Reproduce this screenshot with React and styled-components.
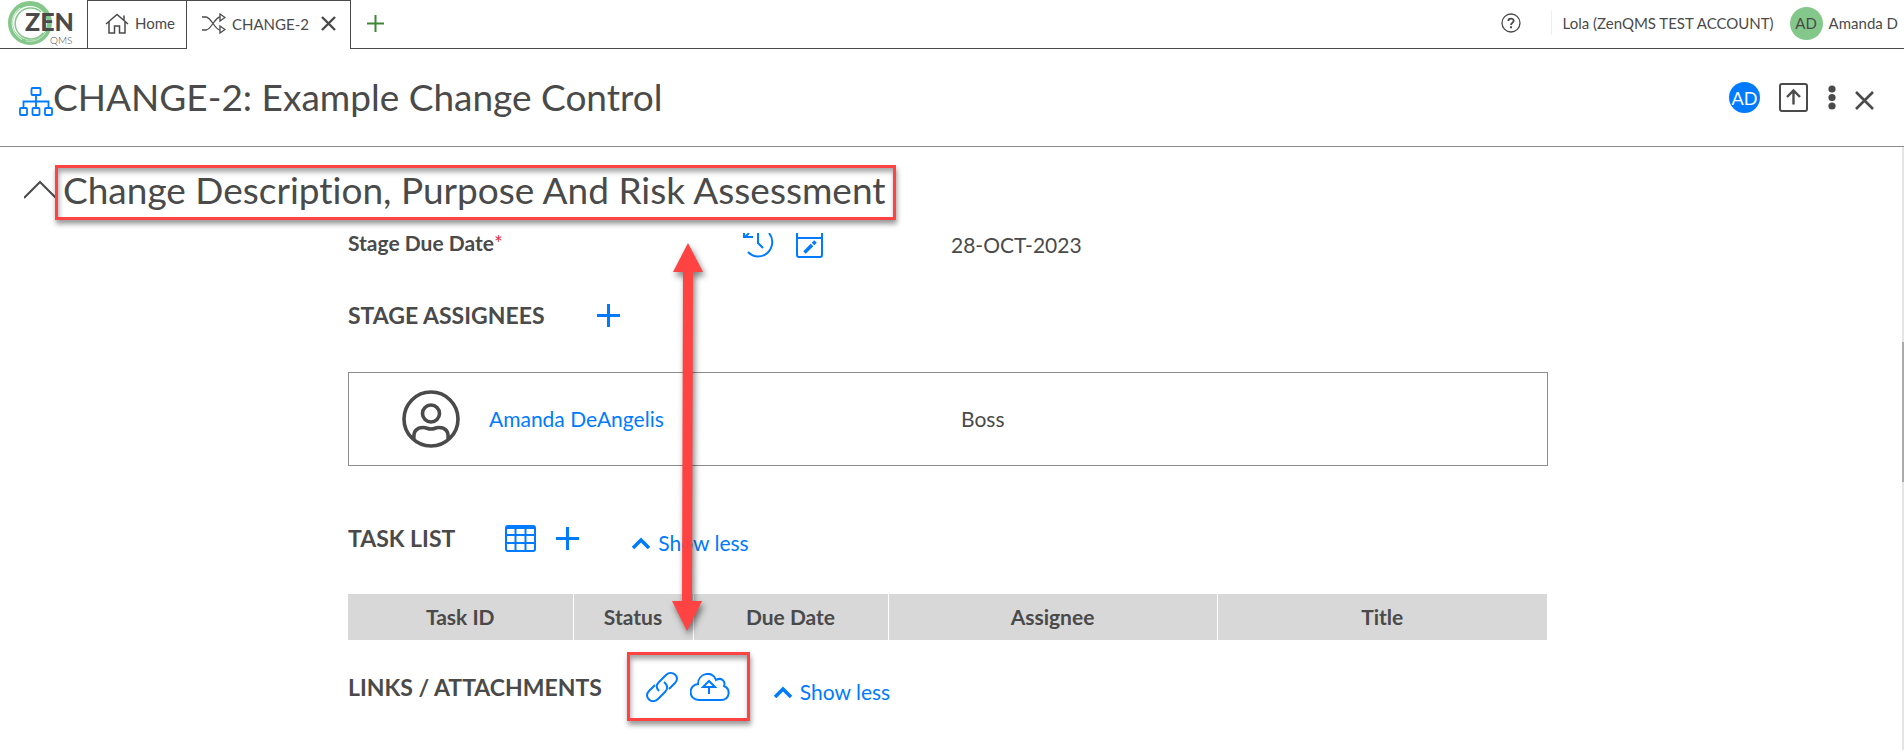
import React from 'react'
import styled, { createGlobalStyle } from 'styled-components'

const ink = '#4a4a4a'
const blue = '#007bff'
const red = '#ff4343'

const GlobalStyle = createGlobalStyle`
  * {
    box-sizing: border-box;
  }

  body {
    margin: 0;
    background: #fff;
    color: ${ink};
    font-family: Lato, 'Open Sans', sans-serif;
    font-size: 21px;
    font-variant-ligatures: none;
    line-height: 24px;
  }

  svg {
    display: block;
    flex: none;
  }
`

const Page = styled.div`
  display: flex;
  flex-direction: column;
  height: 100vh;
  overflow: hidden;
`

const TopBar = styled.header`
  display: flex;
  flex: none;
  height: 49px;
  font-size: 15px;
`

const LogoCell = styled.a`
  width: 87px;
  padding-left: 8px;
  border-bottom: 1px solid ${ink};
`

const Tab = styled.div`
  display: flex;
  align-items: center;
  padding: 0 ${props => (props.$active ? 14 : 11)}px 3px
    ${props => (props.$active ? 15 : 17)}px;
  border: solid ${ink};
  border-width: ${props => (props.$active ? '1px 1px 0 0' : '1px')};
`

const TabLink = styled.a`
  display: flex;
  align-items: center;
  gap: 6px;
  color: inherit;
  text-decoration: none;
`

const IconButton = styled.button`
  display: flex;
  align-items: center;
  justify-content: center;
  padding: 0;
  border: 0;
  background: none;
  color: ${props => props.$color || ink};
  cursor: pointer;
`

const CloseTab = styled(IconButton)`
  margin-left: 12px;
`

const TopRest = styled.div`
  display: flex;
  flex: 1;
  align-items: center;
  justify-content: space-between;
  padding: 0 6px 2px 16px;
  border-bottom: 1px solid ${ink};
`

const Account = styled.div`
  display: flex;
  align-items: center;
`

const AccountName = styled.span`
  margin: 0 16px 0 30px;
  padding-left: 11px;
  border-left: 1px solid #eee;
`

const Avatar = styled.span`
  display: flex;
  align-items: center;
  justify-content: center;
  width: ${props => props.$size}px;
  height: ${props => props.$size}px;
  margin-right: ${props => props.$gap}px;
  border-radius: 50%;
  background: ${props => (props.$blue ? blue : '#83c88a')};
  color: ${props => (props.$blue ? '#fff' : ink)};
`

const TitleBar = styled.div`
  display: flex;
  flex: none;
  align-items: center;
  height: 98px;
  padding: 0 30px 0 19px;
  border-bottom: 1px solid #8c8c8c;
`

const Title = styled.h1`
  flex: 1;
  margin: 0;
  padding-bottom: 2px;
  font-size: 37px;
  font-weight: 400;
  line-height: 48px;
`

const Actions = styled.div`
  display: flex;
  align-items: center;
  font-size: 18px;
`

const Main = styled.main`
  position: relative;
  display: flex;
  flex: 1;
  flex-direction: column;
  min-height: 0;
`

const SectionBar = styled.div`
  display: flex;
  flex: none;
  align-items: center;
  height: 82px;
  padding: 9px 0 0 24px;
`

const SectionToggle = styled(IconButton)`
  width: 31px;
  overflow: hidden;
`

const Marked = styled.div`
  border: 3px solid ${red};
  box-shadow: 1px 4px 5px rgba(0, 0, 0, 0.4),
    inset 1px 4px 5px rgba(0, 0, 0, 0.35);
`

const SectionMark = styled(Marked)`
  padding: 0 7px 5px 5px;
`

const SectionTitle = styled.h2`
  margin: 0;
  font-size: 37px;
  font-weight: 400;
  line-height: 44px;
`

const Scroller = styled.div`
  flex: 1;
  min-height: 0;
  overflow: hidden;
  padding: 4px 8px 0 0;
`

const Content = styled.div`
  max-width: 1200px;
  margin: 0 auto;
`

const DueRow = styled.div`
  display: grid;
  grid-template-columns: 395px 208px 1fr;
  height: 64px;
`

const DueLabel = styled.span`
  font-weight: 700;
  line-height: 20px;

  em {
    color: #dc3545;
    font-style: normal;
    font-weight: 400;
  }
`

const DueIcons = styled.div`
  display: flex;
  align-items: flex-start;
  gap: 22px;
`

const Row = styled.div`
  display: flex;
  align-items: center;
  height: ${props => props.$height}px;
`

const Heading = styled.h3`
  margin: 0 ${props => props.$gap}px 0 0;
  font-size: 23px;
  font-weight: 700;
  line-height: 32px;
`

const Assignee = styled.div`
  display: grid;
  grid-template-columns: 140px 472px 1fr;
  align-items: center;
  height: 94px;
  margin: 39px 0 46px;
  border: 1px solid #8c8c8c;
`

const PersonCell = styled.div`
  padding-left: 53px;
`

const PersonLink = styled.a`
  color: ${blue};
  text-decoration: none;
`

const TaskTools = styled.div`
  display: flex;
  align-items: center;
  gap: 20px;
`

const ShowLess = styled(IconButton)`
  gap: 8px;
  margin: 10px 0 0 ${props => props.$gap}px;
  font: inherit;
`

const TaskTable = styled.table`
  width: 100%;
  margin-top: 30px;
  border-collapse: collapse;
  table-layout: fixed;
`

const TaskHead = styled.th`
  width: ${props => props.$width};
  height: 46px;
  padding: 0;
  border-right: 1px solid #fff;
  background: #d8d8d8;
  font-weight: 700;
`

const UploadMark = styled(Marked)`
  display: flex;
  align-items: center;
  gap: 12px;
  width: 123px;
  height: 69px;
  padding: 0 16px;
`

/* Pointer drawn over the content, from the section title to the upload tools */
const Arrow = styled.svg`
  position: absolute;
  top: 90px;
  left: 664px;
  filter: drop-shadow(2px 4px 3px rgba(0, 0, 0, 0.5));
  pointer-events: none;
`

const Track = styled.div`
  position: absolute;
  top: 0;
  right: 0;
  bottom: 0;
  width: 2px;
  padding-top: 195px;
  background: #e4e4e4;
`

const Thumb = styled.div`
  height: 140px;
  background: #ababab;
`

const Svg = ({ w, h, sw = 2, children }) => (
  <svg
    width={w}
    height={h}
    viewBox={`0 0 ${w} ${h}`}
    fill="none"
    stroke="currentColor"
    strokeWidth={sw}
    aria-hidden="true"
  >
    {children}
  </svg>
)

const Logo = () => (
  <svg width="76" height="48" viewBox="0 0 76 48" role="img" aria-label="ZEN QMS">
    <g fill="none">
      <circle cx="22" cy="23" r="19.5" stroke="#83c88a" strokeWidth="5" />
      <path d="M33 12A15.500 15.500 0 1 0 35 33" stroke="#83c88a" strokeWidth="1.5" />
      <path d="M12 8A18.500 18.500 0 0 0 14 39.500" stroke="#fff" strokeWidth="0.8" />
      <path d="M18 41A18.500 18.500 0 0 0 38 32" stroke="#fff" strokeWidth="0.6" />
    </g>
    <text x="17" y="31" fill={ink} fontSize="25" fontWeight="900" fontFamily="Lato">
      ZEN
    </text>
    <text x="42" y="44" fill={ink} fontSize="10" fontWeight="300" fontFamily="Lato">
      QMS
    </text>
  </svg>
)

const Plus = ({ size, sw = 3 }) => (
  <Svg w={size} h={size} sw={sw}>
    <path d={`M${size / 2} 0V${size}M0 ${size / 2}H${size}`} />
  </Svg>
)

const Cross = ({ size, sw = 2 }) => (
  <Svg w={size} h={size} sw={sw}>
    <path d={`M1 1L${size - 1} ${size - 1}M${size - 1} 1L1 ${size - 1}`} />
  </Svg>
)

const LessToggle = ({ gap }) => (
  <ShowLess type="button" $color={blue} $gap={gap}>
    <Svg w={18} h={12} sw={3.6}>
      <path d="M1 11L9 3L17 11" />
    </Svg>
    Show less
  </ShowLess>
)

const columns = [
  { label: 'Task ID', width: '225px' },
  { label: 'Status', width: '120px' },
  { label: 'Due Date', width: '195px' },
  { label: 'Assignee', width: '329px' },
  { label: 'Title' },
]

function App() {
  return (
    <Page>
      <GlobalStyle />
      <TopBar>
        <LogoCell href="#">
          <Logo />
        </LogoCell>
        <Tab>
          <TabLink href="#">
            <Svg w={24} h={21} sw={1.5}>
              <path d="M1 11L12 1.500L23 11M19 7V2.500M4 9V20H9.500V13H14.500V20H20V9" />
            </Svg>
            Home
          </TabLink>
        </Tab>
        <Tab $active>
          <TabLink href="#">
            <Svg w={24} h={21} sw={1.3}>
              <path d="M0 4H4C9 4 13 17 18 17M0 17H4C9 17 13 4 18 4" />
              <path d="M18 1L23 4.500L18 8ZM18 13L23 16.500L18 20Z" />
            </Svg>
            CHANGE-2
          </TabLink>
          <CloseTab type="button" aria-label="Close tab">
            <Cross size={15} sw={2.4} />
          </CloseTab>
        </Tab>
        <TopRest>
          <IconButton type="button" aria-label="New tab" $color="#3f8534">
            <Plus size={17} sw={2} />
          </IconButton>
          <Account>
            <IconButton type="button" aria-label="Help">
              <Svg w={20} h={20} sw={1.3}>
                <circle cx="10" cy="10" r="9" />
                <path
                  d="M7.300 8C7.300 4.800 12.700 4.800 12.700 7.800C12.700 9.800 10 9.600 10 12"
                  strokeWidth="1.8"
                />
                <path d="M10 13.300V15.200" strokeWidth="2" />
              </Svg>
            </IconButton>
            <AccountName>Lola (ZenQMS TEST ACCOUNT)</AccountName>
            <Avatar $size={33} $gap={6}>
              AD
            </Avatar>
            Amanda D
          </Account>
        </TopRest>
      </TopBar>

      <TitleBar>
        <IconButton type="button" aria-label="Hierarchy" $color={blue}>
          <Svg w={34} h={38} sw={1.8}>
            <rect x="12.500" y="9" width="9" height="7" rx="1" />
            <rect x="1" y="29" width="7" height="7" rx="1" />
            <rect x="13.500" y="29" width="7" height="7" rx="1" />
            <rect x="26" y="29" width="7" height="7" rx="1" />
            <path d="M17 16V29M4.500 29V22.500H29.500V29" />
          </Svg>
        </IconButton>
        <Title>CHANGE-2: Example Change Control</Title>
        <Actions>
          <Avatar $blue $size={31} $gap={19}>
            AD
          </Avatar>
          <IconButton type="button" aria-label="Export">
            <Svg w={29} h={29}>
              <rect x="1" y="1" width="27" height="27" rx="2" />
              <path d="M14.500 21.500V8M8 14L14.500 7.500L21 14" strokeWidth="2.4" />
            </Svg>
          </IconButton>
          <IconButton type="button" aria-label="More">
            <Svg w={47} h={25} sw={0}>
              <g fill="currentColor">
                <circle cx="24" cy="4" r="3.6" />
                <circle cx="24" cy="12.5" r="3.6" />
                <circle cx="24" cy="21" r="3.6" />
              </g>
            </Svg>
          </IconButton>
          <IconButton type="button" aria-label="Close">
            <Svg w={19} h={24} sw={2.6}>
              <path d="M1 6L18 23M18 6L1 23" />
            </Svg>
          </IconButton>
        </Actions>
      </TitleBar>

      <Main>
        <SectionBar>
          <SectionToggle type="button" aria-label="Collapse section">
            <Svg w={33} h={26}>
              <path d="M1 18L17 2L33 18" />
            </Svg>
          </SectionToggle>
          <SectionMark>
            <SectionTitle>Change Description, Purpose And Risk Assessment</SectionTitle>
          </SectionMark>
        </SectionBar>

        <Scroller>
          <Content>
            <DueRow>
              <DueLabel>
                Stage Due Date<em>*</em>
              </DueLabel>
              <DueIcons>
                <IconButton type="button" aria-label="History" $color={blue}>
                  <Svg w={31} h={25}>
                    <path d="M1 0V4H10M2 4L6 0" />
                    <path d="M15 0V10L20 15M26 0C33 9 28 23 15 23.500C10 23.500 7 21 5 19" />
                  </Svg>
                </IconButton>
                <IconButton type="button" aria-label="Edit date" $color={blue}>
                  <Svg w={27} h={25}>
                    <path d="M1 0V22Q1 24 3 24H24Q26 24 26 22V0M1 5H26" />
                    <path d="M8.500 19.500L16 12" strokeWidth="3.6" />
                    <path d="M17 11L19.500 8.500" strokeWidth="3.6" />
                  </Svg>
                </IconButton>
              </DueIcons>
              <span>28-OCT-2023</span>
            </DueRow>

            <Row $height={36}>
              <Heading $gap={52}>STAGE ASSIGNEES</Heading>
              <IconButton type="button" aria-label="Add assignee" $color={blue}>
                <Plus size={23} />
              </IconButton>
            </Row>
            <Assignee>
              <PersonCell>
                <Svg w={58} h={58} sw={3.6}>
                  <circle cx="29" cy="29" r="27" />
                  <circle cx="29" cy="23.5" r="8.5" />
                  <path d="M12 49C11 41 15 37.500 21 37.500C25 37.500 25 39 29 39S33 37.500 37 37.500C43 37.500 47 41 46 49" />
                </Svg>
              </PersonCell>
              <PersonLink href="#">Amanda DeAngelis</PersonLink>
              <span>Boss</span>
            </Assignee>

            <Row $height={52}>
              <Heading $gap={50}>TASK LIST</Heading>
              <TaskTools>
                <IconButton type="button" aria-label="Table view" $color={blue}>
                  <Svg w={31} h={27}>
                    <rect x="1" y="1" width="29" height="25" rx="2" />
                    <path d="M1 3H30M1 10H30M1 18H30M10.500 3V26M20.500 3V26" />
                  </Svg>
                </IconButton>
                <IconButton type="button" aria-label="Add task" $color={blue}>
                  <Plus size={23} />
                </IconButton>
              </TaskTools>
              <LessToggle gap={53} />
            </Row>
            <TaskTable>
              <thead>
                <tr>
                  {columns.map(({ label, width }) => (
                    <TaskHead key={label} $width={width}>
                      {label}
                    </TaskHead>
                  ))}
                </tr>
              </thead>
            </TaskTable>

            <Row $height={93}>
              <Heading $gap={25}>LINKS / ATTACHMENTS</Heading>
              <UploadMark>
                <IconButton type="button" aria-label="Add link" $color={blue}>
                  <Svg w={32} h={32}>
                    <path d="M13 20C9 16 11 13 13 11L20 4C26 -2 35 6 29 12L23 18" />
                    <path d="M18 11C23 15 21 19 19 21L12 28C6 34 -3 26 3 20L9 14" />
                  </Svg>
                </IconButton>
                <IconButton type="button" aria-label="Upload file" $color={blue}>
                  <Svg w={40} h={28}>
                    <path d="M9 27C-2 27 -2 12 8 11C8 0 23 -3 26 7C31 4 36 8 34 13C41 16 40 27 31 27Z" />
                    <path d="M19 21V14M19 8L13 14H25Z" />
                  </Svg>
                </IconButton>
              </UploadMark>
              <LessToggle gap={24} />
            </Row>
          </Content>
        </Scroller>

        <Arrow width="48" height="400" viewBox="0 0 48 400" fill={red} aria-hidden="true">
          <path d="M24 6L39 35H29L28 364H38L23 394L8 364H18L19 35H9Z" />
        </Arrow>
        <Track>
          <Thumb />
        </Track>
      </Main>
    </Page>
  )
}

export default App
